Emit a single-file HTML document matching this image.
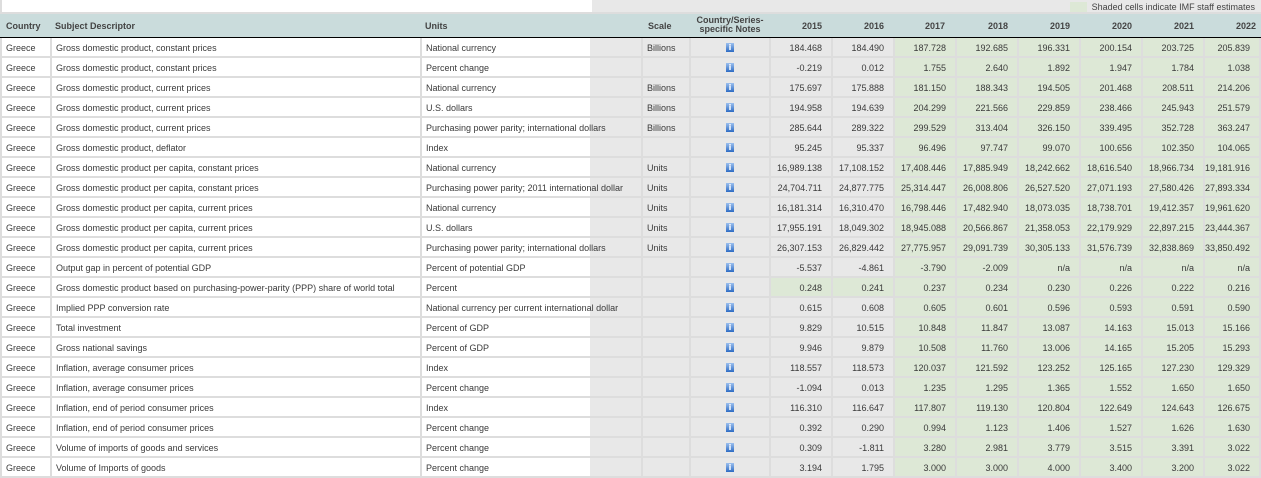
<!DOCTYPE html>
<html><head><meta charset="utf-8"><style>
*{margin:0;padding:0;box-sizing:border-box}
body{width:1261px;height:478px;background:#fff;font-family:"Liberation Sans",Arial,sans-serif;font-size:9px;color:#3a3a3a;overflow:hidden;position:relative}
.top{position:absolute;left:0;top:0;width:1261px;height:14px}
.top .l{position:absolute;left:0;top:0;width:592px;height:14px;background:#fff;border-left:2px solid #ddd;border-bottom:2px solid #ddd}
.top .r{position:absolute;left:592px;top:0;width:669px;height:14px;background:#e8e8e8;border-bottom:2px solid #ddd}
.leg{position:absolute;right:6px;top:2px;font-size:9px;color:#444;padding-left:22px;line-height:10px}
.leg:before{content:"";position:absolute;left:0;top:0;width:17px;height:10px;background:#dde8d6}
.hdr{position:absolute;left:0;top:14px;width:1261px;height:24px;background:#cadcdc;border-bottom:1px solid #000;font-weight:bold;color:#444}
.hdr span{position:absolute;top:7px}
table{position:absolute;left:0;top:38px;border-collapse:separate;border-spacing:0;table-layout:fixed;width:1261px}
td{height:20px;border-right:2px solid #ddd;border-bottom:2px solid #ddd;padding:1px 0 0 4px;white-space:nowrap;overflow:visible;background:#e8e8e8;vertical-align:middle}
td.w{background:#fff}
td.c{border-left:2px solid #ddd}
td.u{background:linear-gradient(to right,#fff 0,#fff 168px,#e8e8e8 168px)}
td.n{text-align:right;padding:1px 9px 0 0}
td.g{background:#dde8d6}
td.i{text-align:center;padding:0}
.ic{display:inline-block;width:8px;height:9px;background:linear-gradient(#9cc0ee,#2d6cc4);color:#fff;font-size:8px;font-weight:bold;line-height:9px;text-align:center;vertical-align:middle;margin-top:-1px;font-family:"DejaVu Sans",sans-serif}
</style></head><body>
<div class="top"><div class="l"></div><div class="r"><div class="leg">Shaded cells indicate IMF staff estimates</div></div></div>
<div class="hdr">
<span style="left:6px">Country</span><span style="left:55px">Subject Descriptor</span><span style="left:425px">Units</span><span style="left:648px">Scale</span>
<span style="left:690px;width:80px;text-align:center;top:2px;line-height:9px">Country/Series-<br>specific Notes</span>
<span style="left:802px">2015</span><span style="left:864px">2016</span><span style="left:925px">2017</span><span style="left:988px">2018</span><span style="left:1050px">2019</span><span style="left:1112px">2020</span><span style="left:1174px">2021</span><span style="left:1236px">2022</span>
</div>
<table>
<colgroup><col style="width:52px"><col style="width:370px"><col style="width:221px"><col style="width:48px"><col style="width:80px"><col style="width:62px"><col style="width:62px"><col style="width:62px"><col style="width:62px"><col style="width:62px"><col style="width:62px"><col style="width:62px"><col style="width:56px"></colgroup>
<tbody id="tb">
</tbody></table>
<script>
var d=[
["Gross domestic product, constant prices","National currency","Billions","184.468","184.490","187.728","192.685","196.331","200.154","203.725","205.839"],
["Gross domestic product, constant prices","Percent change","","-0.219","0.012","1.755","2.640","1.892","1.947","1.784","1.038"],
["Gross domestic product, current prices","National currency","Billions","175.697","175.888","181.150","188.343","194.505","201.468","208.511","214.206"],
["Gross domestic product, current prices","U.S. dollars","Billions","194.958","194.639","204.299","221.566","229.859","238.466","245.943","251.579"],
["Gross domestic product, current prices","Purchasing power parity; international dollars","Billions","285.644","289.322","299.529","313.404","326.150","339.495","352.728","363.247"],
["Gross domestic product, deflator","Index","","95.245","95.337","96.496","97.747","99.070","100.656","102.350","104.065"],
["Gross domestic product per capita, constant prices","National currency","Units","16,989.138","17,108.152","17,408.446","17,885.949","18,242.662","18,616.540","18,966.734","19,181.916"],
["Gross domestic product per capita, constant prices","Purchasing power parity; 2011 international dollar","Units","24,704.711","24,877.775","25,314.447","26,008.806","26,527.520","27,071.193","27,580.426","27,893.334"],
["Gross domestic product per capita, current prices","National currency","Units","16,181.314","16,310.470","16,798.446","17,482.940","18,073.035","18,738.701","19,412.357","19,961.620"],
["Gross domestic product per capita, current prices","U.S. dollars","Units","17,955.191","18,049.302","18,945.088","20,566.867","21,358.053","22,179.929","22,897.215","23,444.367"],
["Gross domestic product per capita, current prices","Purchasing power parity; international dollars","Units","26,307.153","26,829.442","27,775.957","29,091.739","30,305.133","31,576.739","32,838.869","33,850.492"],
["Output gap in percent of potential GDP","Percent of potential GDP","","-5.537","-4.861","-3.790","-2.009","n/a","n/a","n/a","n/a"],
["Gross domestic product based on purchasing-power-parity (PPP) share of world total","Percent","","0.248","0.241","0.237","0.234","0.230","0.226","0.222","0.216"],
["Implied PPP conversion rate","National currency per current international dollar","","0.615","0.608","0.605","0.601","0.596","0.593","0.591","0.590"],
["Total investment","Percent of GDP","","9.829","10.515","10.848","11.847","13.087","14.163","15.013","15.166"],
["Gross national savings","Percent of GDP","","9.946","9.879","10.508","11.760","13.006","14.165","15.205","15.293"],
["Inflation, average consumer prices","Index","","118.557","118.573","120.037","121.592","123.252","125.165","127.230","129.329"],
["Inflation, average consumer prices","Percent change","","-1.094","0.013","1.235","1.295","1.365","1.552","1.650","1.650"],
["Inflation, end of period consumer prices","Index","","116.310","116.647","117.807","119.130","120.804","122.649","124.643","126.675"],
["Inflation, end of period consumer prices","Percent change","","0.392","0.290","0.994","1.123","1.406","1.527","1.626","1.630"],
["Volume of imports of goods and services","Percent change","","0.309","-1.811","3.280","2.981","3.779","3.515","3.391","3.022"],
["Volume of Imports of goods","Percent change","","3.194","1.795","3.000","3.000","4.000","3.400","3.200","3.022"]];
var h="";
d.forEach(function(r,k){
h+='<tr><td class="w c">Greece</td><td class="w">'+r[0]+'</td><td class="u">'+r[1]+'</td><td>'+r[2]+'</td><td class="i"><span class="ic">i</span></td>';
for(var j=3;j<11;j++){var g=(j>=5||k==12)?' g':'';h+='<td class="n'+g+'">'+r[j]+'</td>';}
h+='</tr>';});
document.getElementById("tb").innerHTML=h;
</script>
</body></html>
